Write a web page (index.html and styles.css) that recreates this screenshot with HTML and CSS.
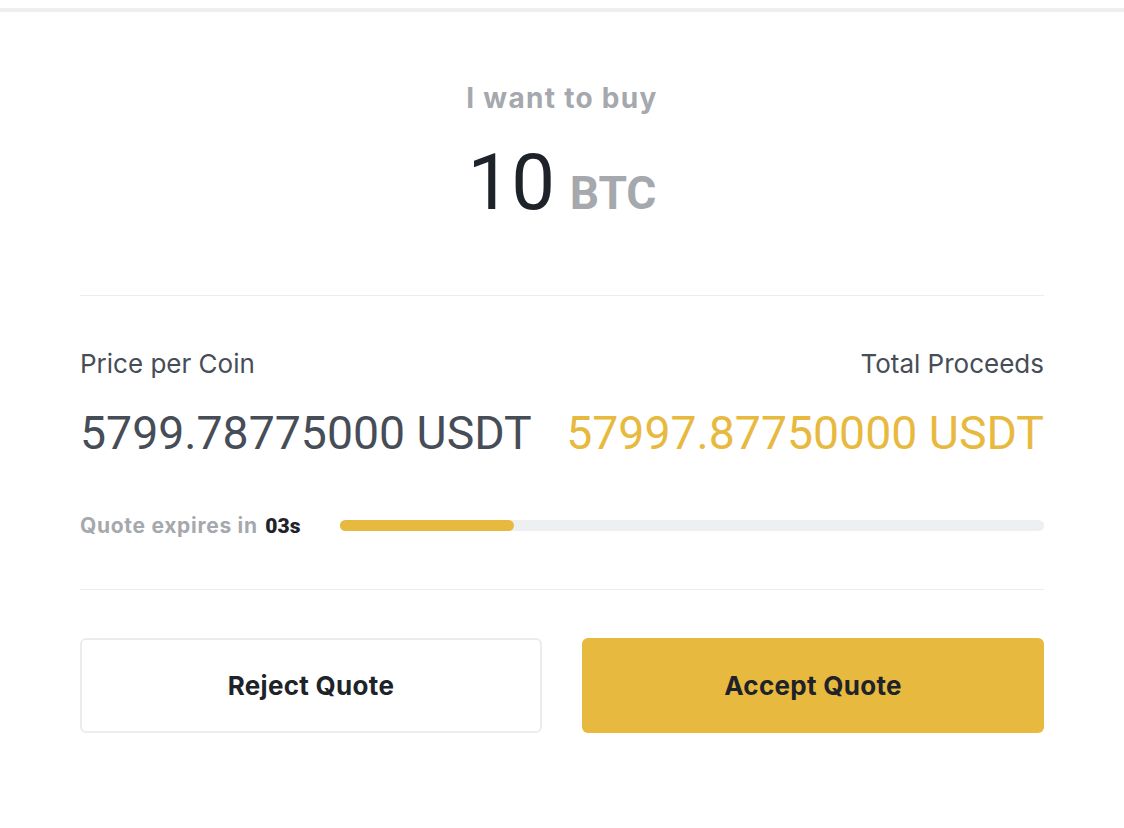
FILE: index.html
```html
<!DOCTYPE html>
<html lang="en">

<head>
    <meta charset="UTF-8" />
    <meta name="viewport" content="width=device-width, initial-scale=1.0" />
    <title>Quote</title>
    <link rel="stylesheet" href="styles.css">
</head>

<body>
    <div class="top-line"></div>
    <div class="quote">
        <div class="quote-head">
            <div class="quote-title">I want to buy</div>
            <div class="quote-amount">
                <span class="amount-num">10</span>
                <span class="amount-coin">BTC</span>
            </div>
        </div>

        <div class="quote-prices">
            <div class="price-col">
                <div class="price-label">Price per Coin</div>
                <div class="price-value">5799.78775000 USDT</div>
            </div>
            <div class="price-col right">
                <div class="price-label">Total Proceeds</div>
                <div class="price-value gold">57997.87750000 USDT</div>
            </div>
        </div>

        <div class="quote-timer">
            <div class="timer-text">Quote expires in <b>03s</b></div>
            <div class="timer-bar">
                <div class="timer-fill" style="width: 24.7%"></div>
            </div>
        </div>

        <div class="quote-btns">
            <button class="btn btn-reject">Reject Quote</button>
            <button class="btn btn-accept">Accept Quote</button>
        </div>
    </div>
</body>

</html>
```

FILE: styles.css
```css
* {
    margin: 0;
    padding: 0;
    box-sizing: border-box;
}

body {
    background: #fff;
    font-family: Inter, "Liberation Sans", sans-serif;
    color: #1e2329;
}

.top-line {
    height: 4px;
    margin-top: 8px;
    background-color: #eeeeee;
}

.quote {
    width: 964px;
    margin: 0 auto;
}

.quote-head {
    text-align: center;
    padding-top: 66px;
    height: 284px;
    border-bottom: 1px solid #eaecef;
}

.quote-title {
    font-size: 28px;
    line-height: 40px;
    font-weight: 700;
    letter-spacing: 1.3px;
    color: #a5a8ad;
}

.quote-amount {
    margin-top: 20px;
    line-height: 90px;
}

.amount-num {
    font-family: Roboto, "Liberation Sans", sans-serif;
    font-size: 78px;
    font-weight: 400;
    color: #1e2329;
}

.amount-coin {
    font-family: Roboto, "Liberation Sans", sans-serif;
    font-size: 46px;
    font-weight: 700;
    color: #a5a8ad;
    margin-left: 10px;
}

.quote-prices {
    display: flex;
    justify-content: space-between;
    padding-top: 50px;
}

.price-col.right {
    text-align: right;
}

.price-label {
    font-size: 26px;
    line-height: 36px;
    color: #474d57;
}

.price-value {
    margin-top: 23px;
    font-family: Roboto, "Liberation Sans", sans-serif;
    font-size: 46.4px;
    line-height: 56px;
    color: #474d57;
}

.price-value.gold {
    color: #e8b93f;
}

.quote-timer {
    display: flex;
    align-items: center;
    height: 129px;
    border-bottom: 1px solid #eaecef;
}

.timer-text {
    font-size: 21px;
    font-weight: 700;
    letter-spacing: 0.7px;
    color: #a5a8ad;
    width: 260px;
}

.timer-text b {
    font-family: Roboto, "Liberation Sans", sans-serif;
    letter-spacing: 0;
    color: #1e2329;
    margin-left: 2px;
}

.timer-bar {
    flex: 1;
    height: 11px;
    border-radius: 6px;
    background-color: #eeeff1;
}

.timer-fill {
    height: 100%;
    border-radius: 6px;
    background-color: #e8b93f;
}

.quote-btns {
    display: flex;
    justify-content: space-between;
    margin-top: 48px;
}

.btn {
    width: 462px;
    height: 95px;
    border-radius: 6px;
    font-family: Inter, "Liberation Sans", sans-serif;
    font-size: 26px;
    font-weight: 700;
    letter-spacing: 0.3px;
    color: #1e2329;
    cursor: pointer;
}

.btn-reject {
    background-color: #fff;
    border: 2px solid #eaecef;
}

.btn-accept {
    background-color: #e8b93f;
    border: none;
}
```
